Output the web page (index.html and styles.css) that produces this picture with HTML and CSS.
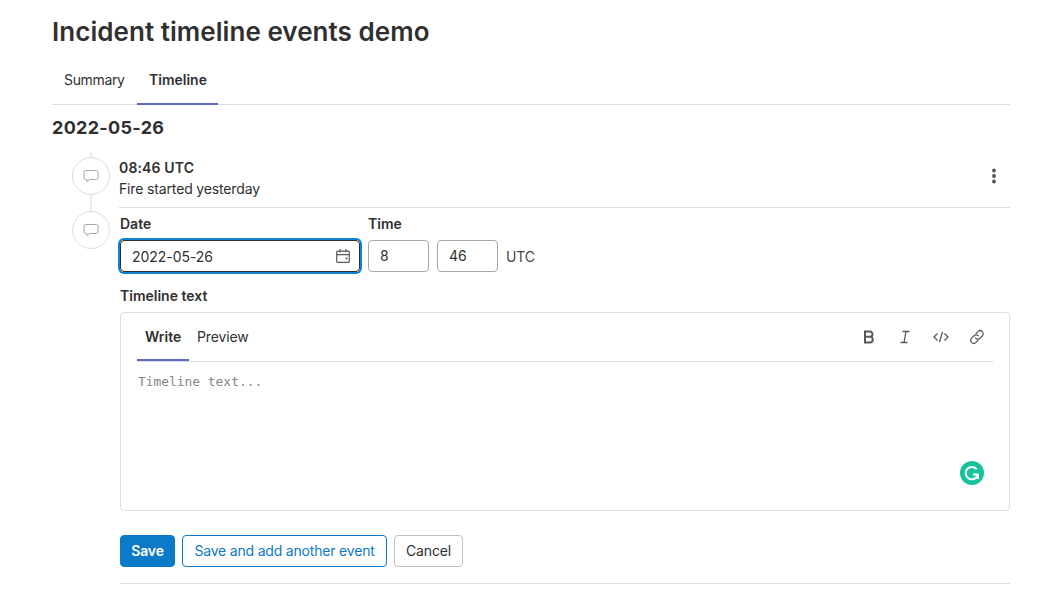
FILE: index.html
```html
<!DOCTYPE html>
<html lang="en">

<head>
    <meta charset="UTF-8">
    <title>Incident timeline events demo</title>
    <link rel="stylesheet" href="styles.css">
</head>

<body>
    <div class="page">
        <h1 class="title">Incident timeline events demo</h1>
        <nav class="tabs">
            <a class="tab tab-first" href="javascript:;">Summary</a>
            <a class="tab tab-active" href="javascript:;">Timeline</a>
        </nav>
        <h2 class="date-head">2022-05-26</h2>

        <ul class="timeline">
            <li class="event">
                <div class="rail">
                    <span class="rail-top"></span>
                    <span class="bubble">
                        <svg width="16" height="16" viewBox="0 0 16 16" fill="none" stroke="#a6a6a6" stroke-width="1" stroke-linejoin="round">
                            <path d="M2.5 2.5h11a1.5 1.5 0 0 1 1.5 1.5v6a1.5 1.5 0 0 1-1.500 1.500H6.500L4 14v-2.500H2.500A1.500 1.500 0 0 1 1 10V4a1.500 1.500 0 0 1 1.500-1.500z"/>
                        </svg>
                    </span>
                    <span class="rail-fill"></span>
                </div>
                <div class="event-body">
                    <div class="event-text">
                        <div class="event-time">08:46 UTC</div>
                        <div class="event-note">Fire started yesterday</div>
                    </div>
                    <svg class="more" width="16" height="16" viewBox="0 0 16 16" fill="#525252">
                        <circle cx="8" cy="2.500" r="1.900"/>
                        <circle cx="8" cy="8" r="1.900"/>
                        <circle cx="8" cy="13.500" r="1.900"/>
                    </svg>
                </div>
            </li>
            <li class="event event-form">
                <div class="rail">
                    <span class="bubble">
                        <svg width="16" height="16" viewBox="0 0 16 16" fill="none" stroke="#a6a6a6" stroke-width="1" stroke-linejoin="round">
                            <path d="M2.5 2.5h11a1.5 1.5 0 0 1 1.5 1.5v6a1.5 1.5 0 0 1-1.500 1.500H6.500L4 14v-2.500H2.500A1.500 1.500 0 0 1 1 10V4a1.500 1.500 0 0 1 1.500-1.500z"/>
                        </svg>
                    </span>
                </div>
                <form class="form">
                    <div class="when">
                        <div class="field-date">
                            <label class="label">Date</label>
                            <div class="date-input">
                                <span>2022-05-26</span>
                                <svg width="16" height="16" viewBox="0 0 16 16" fill="none" stroke="#595959" stroke-width="1.200">
                                    <path d="M2.600 3.100h10.800a.9.9 0 0 1 .9.9v9.400a.9.9 0 0 1-.9.9H2.600a.9.9 0 0 1-.9-.9V4a.9.9 0 0 1 .9-.9zM1.700 6.600h12.600M5 1v3.400M11 1v3.400"/>
                                    <path d="M10.500 10.500h2" stroke-width="1.600"/>
                                </svg>
                            </div>
                        </div>
                        <div class="field-time">
                            <label class="label">Time</label>
                            <div class="time-row">
                                <span class="time-input">8</span>
                                <span class="time-input">46</span>
                                <span class="utc">UTC</span>
                            </div>
                        </div>
                    </div>

                    <label class="label label-text">Timeline text</label>
                    <div class="editor">
                        <div class="editor-head">
                            <a class="editor-tab editor-tab-active" href="javascript:;">Write</a>
                            <a class="editor-tab" href="javascript:;">Preview</a>
                            <div class="tools">
                                <svg width="16" height="16" viewBox="0 0 16 16" fill="none" stroke="#595959" stroke-width="2">
                                    <path d="M4 2.500h4.800a2.600 2.600 0 0 1 0 5.300H4zM4 7.800h5.400a2.900 2.900 0 0 1 0 5.700H4zM4 1.500v13"/>
                                </svg>
                                <svg width="16" height="16" viewBox="0 0 16 16" fill="none" stroke="#595959" stroke-width="1.300">
                                    <path d="M5.500 2.500h7M3.500 13.500h7M9 2.500l-2 11"/>
                                </svg>
                                <svg width="16" height="16" viewBox="0 0 16 16" fill="none" stroke="#595959" stroke-width="1.300">
                                    <path d="M4.500 4.500L1 8l3.500 3.500M11.500 4.500L15 8l-3.500 3.500M9.500 3l-3 10"/>
                                </svg>
                                <svg width="16" height="16" viewBox="0 0 16 16" fill="none" stroke="#595959" stroke-width="1.300" stroke-linecap="round">
                                    <path d="M7 4.600l2-2a3 3 0 0 1 4.300 4.300l-2.300 2.300a3 3 0 0 1-4.300 0"/>
                                    <path d="M9 11.400l-2 2a3 3 0 0 1-4.300-4.300l2.300-2.300a3 3 0 0 1 4.300 0"/>
                                </svg>
                            </div>
                        </div>
                        <div class="editor-body">Timeline text...</div>
                        <span class="grammarly">
                            <svg width="24" height="24" viewBox="0 0 24 24" fill="none" stroke="#fff" stroke-width="2">
                                <path d="M16.800 8.300A6.200 6.200 0 1 0 17.600 14.500"/>
                                <path d="M13 13.500h5v4.500"/>
                            </svg>
                        </span>
                    </div>

                    <div class="actions">
                        <button class="btn btn-save" type="button">Save</button>
                        <button class="btn btn-another" type="button">Save and add another event</button>
                        <button class="btn btn-cancel" type="button">Cancel</button>
                    </div>
                    <div class="form-end"></div>
                </form>
            </li>
        </ul>
    </div>
</body>

</html>
```

FILE: styles.css
```css
* {
    box-sizing: border-box;
}

body {
    margin: 0;
    background: #fff;
    color: #303030;
    font-size: 14px;
    font-family: Inter, "Liberation Sans", sans-serif;
    letter-spacing: -0.15px;
}

ul {
    padding: 0;
    margin: 0;
    list-style: none;
}

a {
    color: inherit;
    text-decoration: none;
}

.page {
    width: 958px;
    height: 595px;
    margin-left: 52px;
    overflow: hidden;
}

.title {
    height: 32px;
    margin: 16px 0 0;
    font-size: 26px;
    font-weight: 600;
    line-height: 32px;
    letter-spacing: 0.05px;
}

.tabs {
    display: flex;
    height: 57px;
    padding-top: 1px;
    border-bottom: 1px solid #dcdcde;
}

.tab {
    height: 56px;
    padding: 23px 12px 0;
    line-height: 16px;
}

.tab-first {
    width: 85px;
    letter-spacing: -0.35px;
}

.tab-active {
    width: 81px;
    font-weight: 600;
    letter-spacing: 0;
    border-bottom: 2px solid #5f67c4;
}

.date-head {
    height: 24px;
    margin: 11px 0 0;
    font-size: 18px;
    font-weight: 700;
    line-height: 24px;
    letter-spacing: 0.3px;
}

.timeline {
    margin-top: 12px;
}

.event {
    display: flex;
}

.rail {
    display: flex;
    flex-direction: column;
    align-items: center;
    flex: none;
    width: 38px;
    margin-left: 20px;
}

.rail-top {
    width: 2px;
    height: 5px;
    background: #ececef;
}

.rail-fill {
    width: 2px;
    height: 16px;
    background: #ececef;
}

.bubble {
    display: flex;
    align-items: center;
    justify-content: center;
    flex: none;
    width: 38px;
    height: 38px;
    border: 1px solid #dcdcde;
    border-radius: 50%;
}

.event-body {
    display: flex;
    align-items: flex-start;
    justify-content: space-between;
    flex: 1;
    height: 56px;
    margin-left: 9px;
    padding: 6px 8px 0 0;
    border-bottom: 1px solid #dcdcde;
}

.event-time {
    font-weight: 600;
    line-height: 20px;
    letter-spacing: 0.15px;
}

.event-note {
    line-height: 20px;
    margin-top: 1px;
}

.more {
    margin-top: 10px;
}

.form {
    flex: 1;
    margin-left: 10px;
}

.when {
    display: flex;
    margin-top: 3px;
}

.label {
    display: block;
    height: 20px;
    font-weight: 600;
    line-height: 20px;
    letter-spacing: 0;
}

.field-date {
    width: 248px;
}

.date-input {
    display: flex;
    align-items: center;
    justify-content: space-between;
    width: 240px;
    height: 32px;
    margin-top: 6px;
    padding: 0 8px 0 11px;
    border: 1px solid #303030;
    border-radius: 4px;
    box-shadow: 0 0 0 2px #0f85d0;
    letter-spacing: -0.05px;
}

.time-row {
    display: flex;
    align-items: center;
    margin-top: 6px;
}

.time-input {
    width: 61px;
    height: 32px;
    margin-right: 8px;
    padding-left: 11px;
    border: 1px solid #a8a8ab;
    border-radius: 4px;
    line-height: 30px;
    letter-spacing: 0;
}

.utc {
    color: #444;
}

.label-text {
    margin-top: 14px;
}

.editor {
    position: relative;
    height: 199px;
    margin-top: 6px;
    padding: 0 16px;
    border: 1px solid #dcdcde;
    border-radius: 4px;
}

.editor-head {
    display: flex;
    align-items: flex-start;
    height: 49px;
    border-bottom: 1px solid #dcdcde;
}

.editor-tab {
    height: 48px;
    padding: 16px 8px 0;
    line-height: 16px;
}

.editor-tab-active {
    width: 52px;
    font-weight: 600;
    letter-spacing: 0;
    border-bottom: 2px solid #5f67c4;
}

.tools {
    display: flex;
    gap: 20px;
    margin: 16px 8px 0 auto;
}

.editor-body {
    padding: 12px 1px;
    color: #868686;
    font-size: 12.900px;
    font-family: "DejaVu Sans Mono", "Liberation Mono", monospace;
    line-height: 16px;
    letter-spacing: 0;
}

.grammarly {
    position: absolute;
    top: 148px;
    left: 839px;
    display: block;
    width: 24px;
    height: 24px;
    border-radius: 50%;
    background: #15c39a;
}

.actions {
    display: flex;
    gap: 7px;
    margin-top: 24px;
}

.btn {
    height: 32px;
    padding: 0;
    border: 1px solid #bfbfc3;
    border-radius: 4px;
    background: #fff;
    color: #303030;
    font-size: 14px;
    font-family: inherit;
    line-height: 16px;
    letter-spacing: -0.15px;
}

.btn-save {
    width: 55px;
    border-color: #0b7ac8;
    background: #0b7ac8;
    color: #fff;
    font-weight: 600;
}

.btn-another {
    width: 205px;
    border-color: #0b7ac8;
    color: #0b7ac8;
    letter-spacing: -0.19px;
}

.btn-cancel {
    width: 69px;
}

.form-end {
    height: 1px;
    margin-top: 16px;
    background: #dcdcde;
}
```
